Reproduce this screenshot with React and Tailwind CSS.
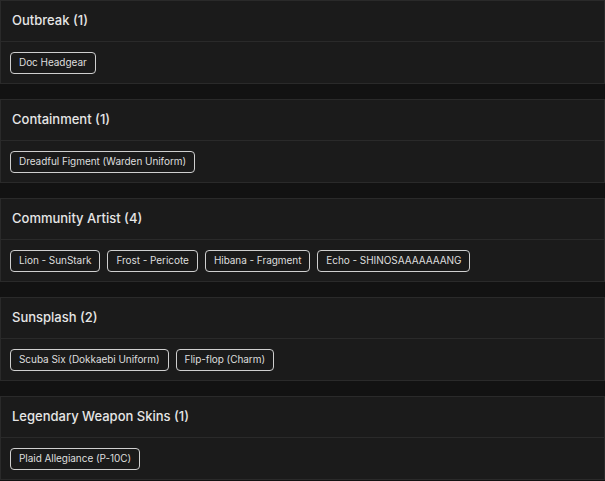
import React from 'react';

const sections = [
  { title: 'Outbreak', items: ['Doc Headgear'] },
  { title: 'Containment', items: ['Dreadful Figment (Warden Uniform)'] },
  {
    title: 'Community Artist',
    items: ['Lion - SunStark', 'Frost - Pericote', 'Hibana - Fragment', 'Echo - SHINOSAAAAAAANG'],
  },
  { title: 'Sunsplash', items: ['Scuba Six (Dokkaebi Uniform)', 'Flip-flop (Charm)'] },
  { title: 'Legendary Weapon Skins', items: ['Plaid Allegiance (P-10C)'] },
];

function Section({ title, items }) {
  return (
    <div className="bg-[#1b1b1b] border border-[#2a2a2a] shrink-0">
      {/* Header */}
      <div className="h-[41px] flex items-center px-[11px] border-b border-[#2a2a2a]">
        <h3 className="text-[13px] font-medium text-[#e6e6e6]">
          {title} ({items.length})
        </h3>
      </div>
      {/* Chips */}
      <div className="h-[41px] flex items-center gap-[7px] px-[9px]">
        {items.map((item) => (
          <span
            key={item}
            className="h-[22px] flex items-center px-[8px] rounded-[4px] border-[1.5px] border-[#cfcfcf] bg-[#1a1a1a] text-[10px] tracking-[-0.05px] text-[#dedede] whitespace-nowrap"
          >
            {item}
          </span>
        ))}
      </div>
    </div>
  );
}

export default function App() {
  return (
    <div
      className="w-[605px] h-[481px] overflow-hidden bg-[#121212] flex flex-col gap-[15px]"
      style={{ fontFamily: 'Inter, "Noto Sans", sans-serif' }}
    >
      {sections.map((s) => (
        <Section key={s.title} {...s} />
      ))}
    </div>
  );
}
